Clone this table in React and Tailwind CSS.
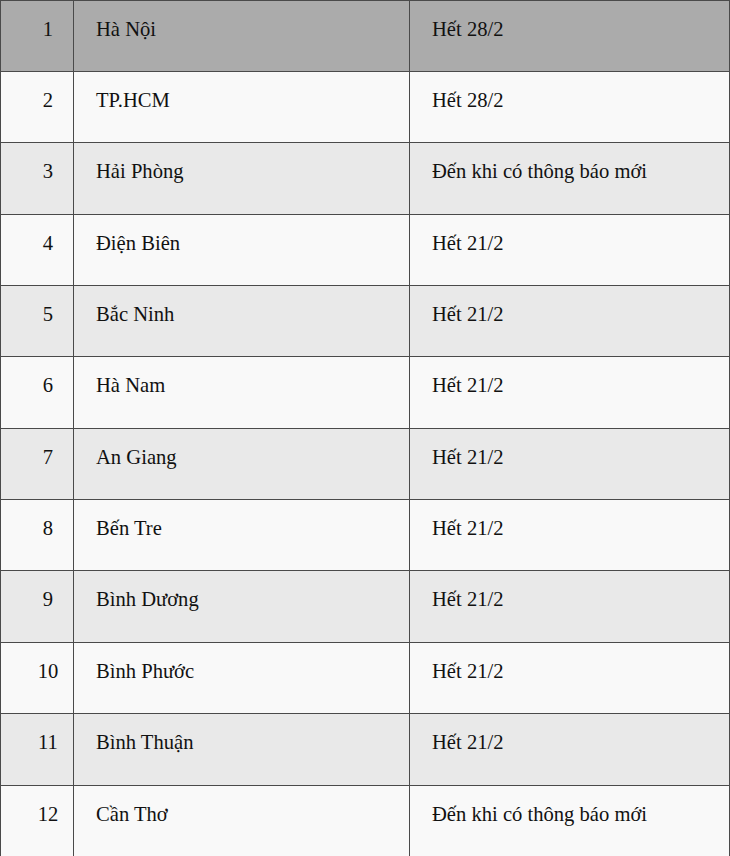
import React from 'react';

const rows = [
  { n: '1', name: 'Hà Nội', until: 'Hết 28/2', bg: 'bg-[#ababab]', h: 'h-[71px]' },
  { n: '2', name: 'TP.HCM', until: 'Hết 28/2', bg: 'bg-[#f9f9f9]', h: 'h-[71px]' },
  { n: '3', name: 'Hải Phòng', until: 'Đến khi có thông báo mới', bg: 'bg-[#e9e9e9]', h: 'h-[72px]' },
  { n: '4', name: 'Điện Biên', until: 'Hết 21/2', bg: 'bg-[#f9f9f9]', h: 'h-[71px]' },
  { n: '5', name: 'Bắc Ninh', until: 'Hết 21/2', bg: 'bg-[#e9e9e9]', h: 'h-[71px]' },
  { n: '6', name: 'Hà Nam', until: 'Hết 21/2', bg: 'bg-[#f9f9f9]', h: 'h-[72px]' },
  { n: '7', name: 'An Giang', until: 'Hết 21/2', bg: 'bg-[#e9e9e9]', h: 'h-[71px]' },
  { n: '8', name: 'Bến Tre', until: 'Hết 21/2', bg: 'bg-[#f9f9f9]', h: 'h-[71px]' },
  { n: '9', name: 'Bình Dương', until: 'Hết 21/2', bg: 'bg-[#e9e9e9]', h: 'h-[72px]' },
  { n: '10', name: 'Bình Phước', until: 'Hết 21/2', bg: 'bg-[#f9f9f9]', h: 'h-[71px]' },
  { n: '11', name: 'Bình Thuận', until: 'Hết 21/2', bg: 'bg-[#e9e9e9]', h: 'h-[72px]' },
  { n: '12', name: 'Cần Thơ', until: 'Đến khi có thông báo mới', bg: 'bg-[#f9f9f9]', h: 'h-[71px]' },
];

export default function App() {
  return (
    <div
      className="w-[730px] h-[856px] overflow-hidden bg-white text-[20.6px] leading-[20px] text-[#111111]"
      style={{ fontFamily: '"Liberation Serif", "Times New Roman", serif' }}
    >
      <div className="flex flex-col border-l border-r border-[#4a4a4a]">
        {rows.map((r) => (
          <div key={r.n} className={`flex border-t border-[#4a4a4a] ${r.h} ${r.bg}`}>
            <div className="w-[73px] shrink-0 border-r border-[#4a4a4a] pt-[18px] pl-[22px] text-center">
              {r.n}
            </div>
            <div className="w-[336px] shrink-0 border-r border-[#4a4a4a] pt-[18px] pl-[22px]">
              {r.name}
            </div>
            <div className="flex-1 pt-[18px] pl-[22px]">{r.until}</div>
          </div>
        ))}
      </div>
    </div>
  );
}
